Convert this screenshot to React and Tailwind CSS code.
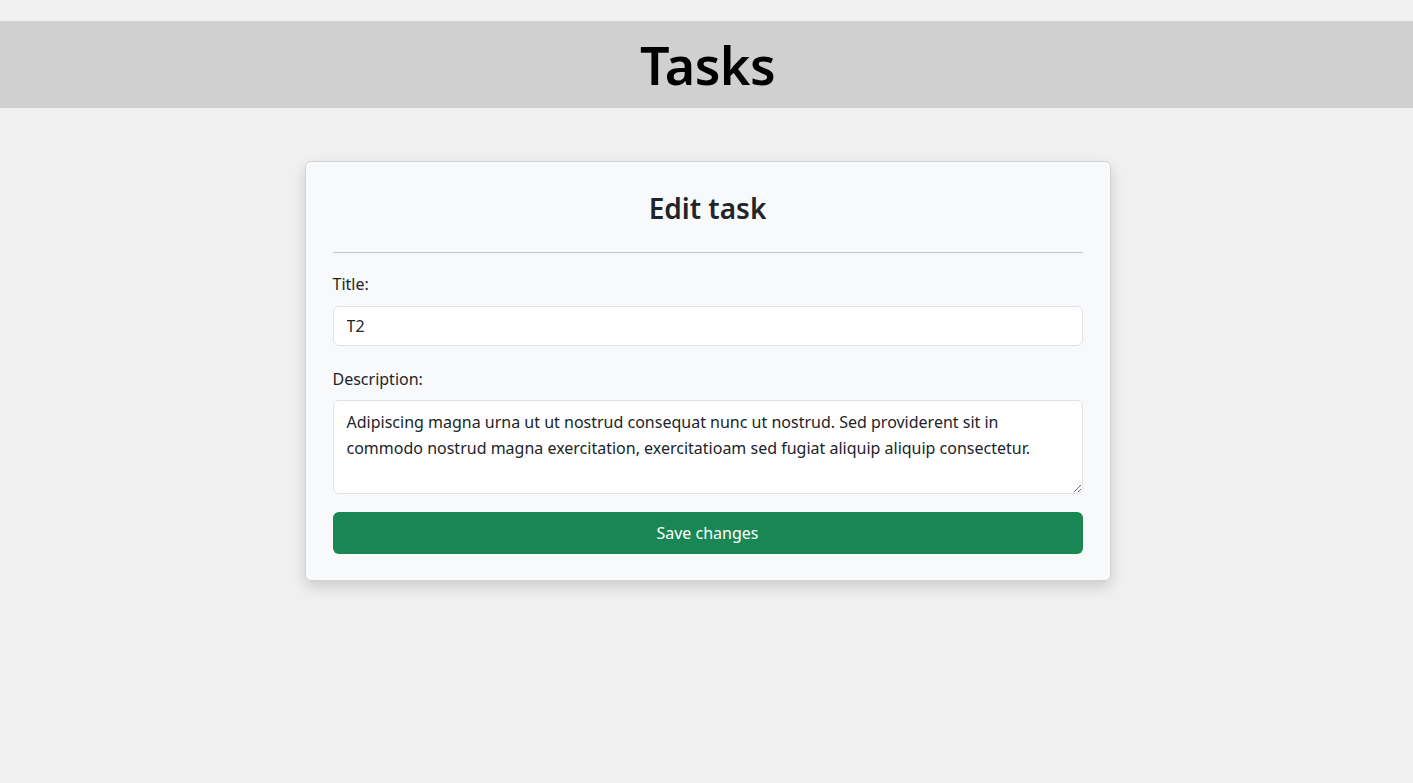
import React from 'react';

const App = () => {
    return (
        <div className="min-h-[783px] bg-[#f0f0f0] pt-[21px] text-[#212529]" style={{ fontFamily: '"Noto Sans", "Open Sans", sans-serif' }}>
            {/* HEADER */}
            <header className="h-[87px] bg-[#d0d0d0] flex items-center justify-center">
                <h1 className="text-[52px] font-semibold text-black leading-none tracking-[-0.5px] translate-x-[1px]">Tasks</h1>
            </header>

            {/* EDIT CARD */}
            <div className="mt-[53px] mx-auto w-[806px] translate-x-[1px] bg-[#f8f9fa] border border-[#d3d4d5] rounded-[6px] shadow-[0_6px_14px_rgba(0,0,0,0.15)] px-[27px] pt-[23px] pb-[26px]">
                <h2 className="text-center text-[28px] font-semibold leading-[46px] text-[#212529]">Edit task</h2>
                <hr className="mt-[21px] border-0 border-t border-[#c6c7c8]" />

                <form className="mt-[19px]" onSubmit={(e) => e.preventDefault()}>
                    <label className="block text-[16px] leading-[24px] text-[#212529]">Title:</label>
                    <input
                        type="text"
                        defaultValue="T2"
                        className="mt-[10px] block w-full h-[40px] px-[13px] bg-white border border-[#dee2e6] rounded-[6px] text-[16px] text-[#212529] outline-none"
                    />

                    <label className="block mt-[21px] text-[16px] leading-[24px] text-[#212529]">Description:</label>
                    <textarea
                        rows={3}
                        defaultValue="Adipiscing magna urna ut ut nostrud consequat nunc ut nostrud. Sed providerent sit in commodo nostrud magna exercitation, exercitatioam sed fugiat aliquip aliquip consectetur."
                        className="mt-[9px] block w-full h-[94px] px-[13px] pt-[8px] pb-[6px] bg-white border border-[#dee2e6] rounded-[6px] text-[16px] leading-[26px] text-[#212529] outline-none"
                    />

                    <button
                        type="submit"
                        className="mt-[18px] block w-full h-[42px] bg-[#198754] text-white text-[16px] rounded-[6px]"
                    >
                        Save changes
                    </button>
                </form>
            </div>
        </div>
    );
};

export default App;
